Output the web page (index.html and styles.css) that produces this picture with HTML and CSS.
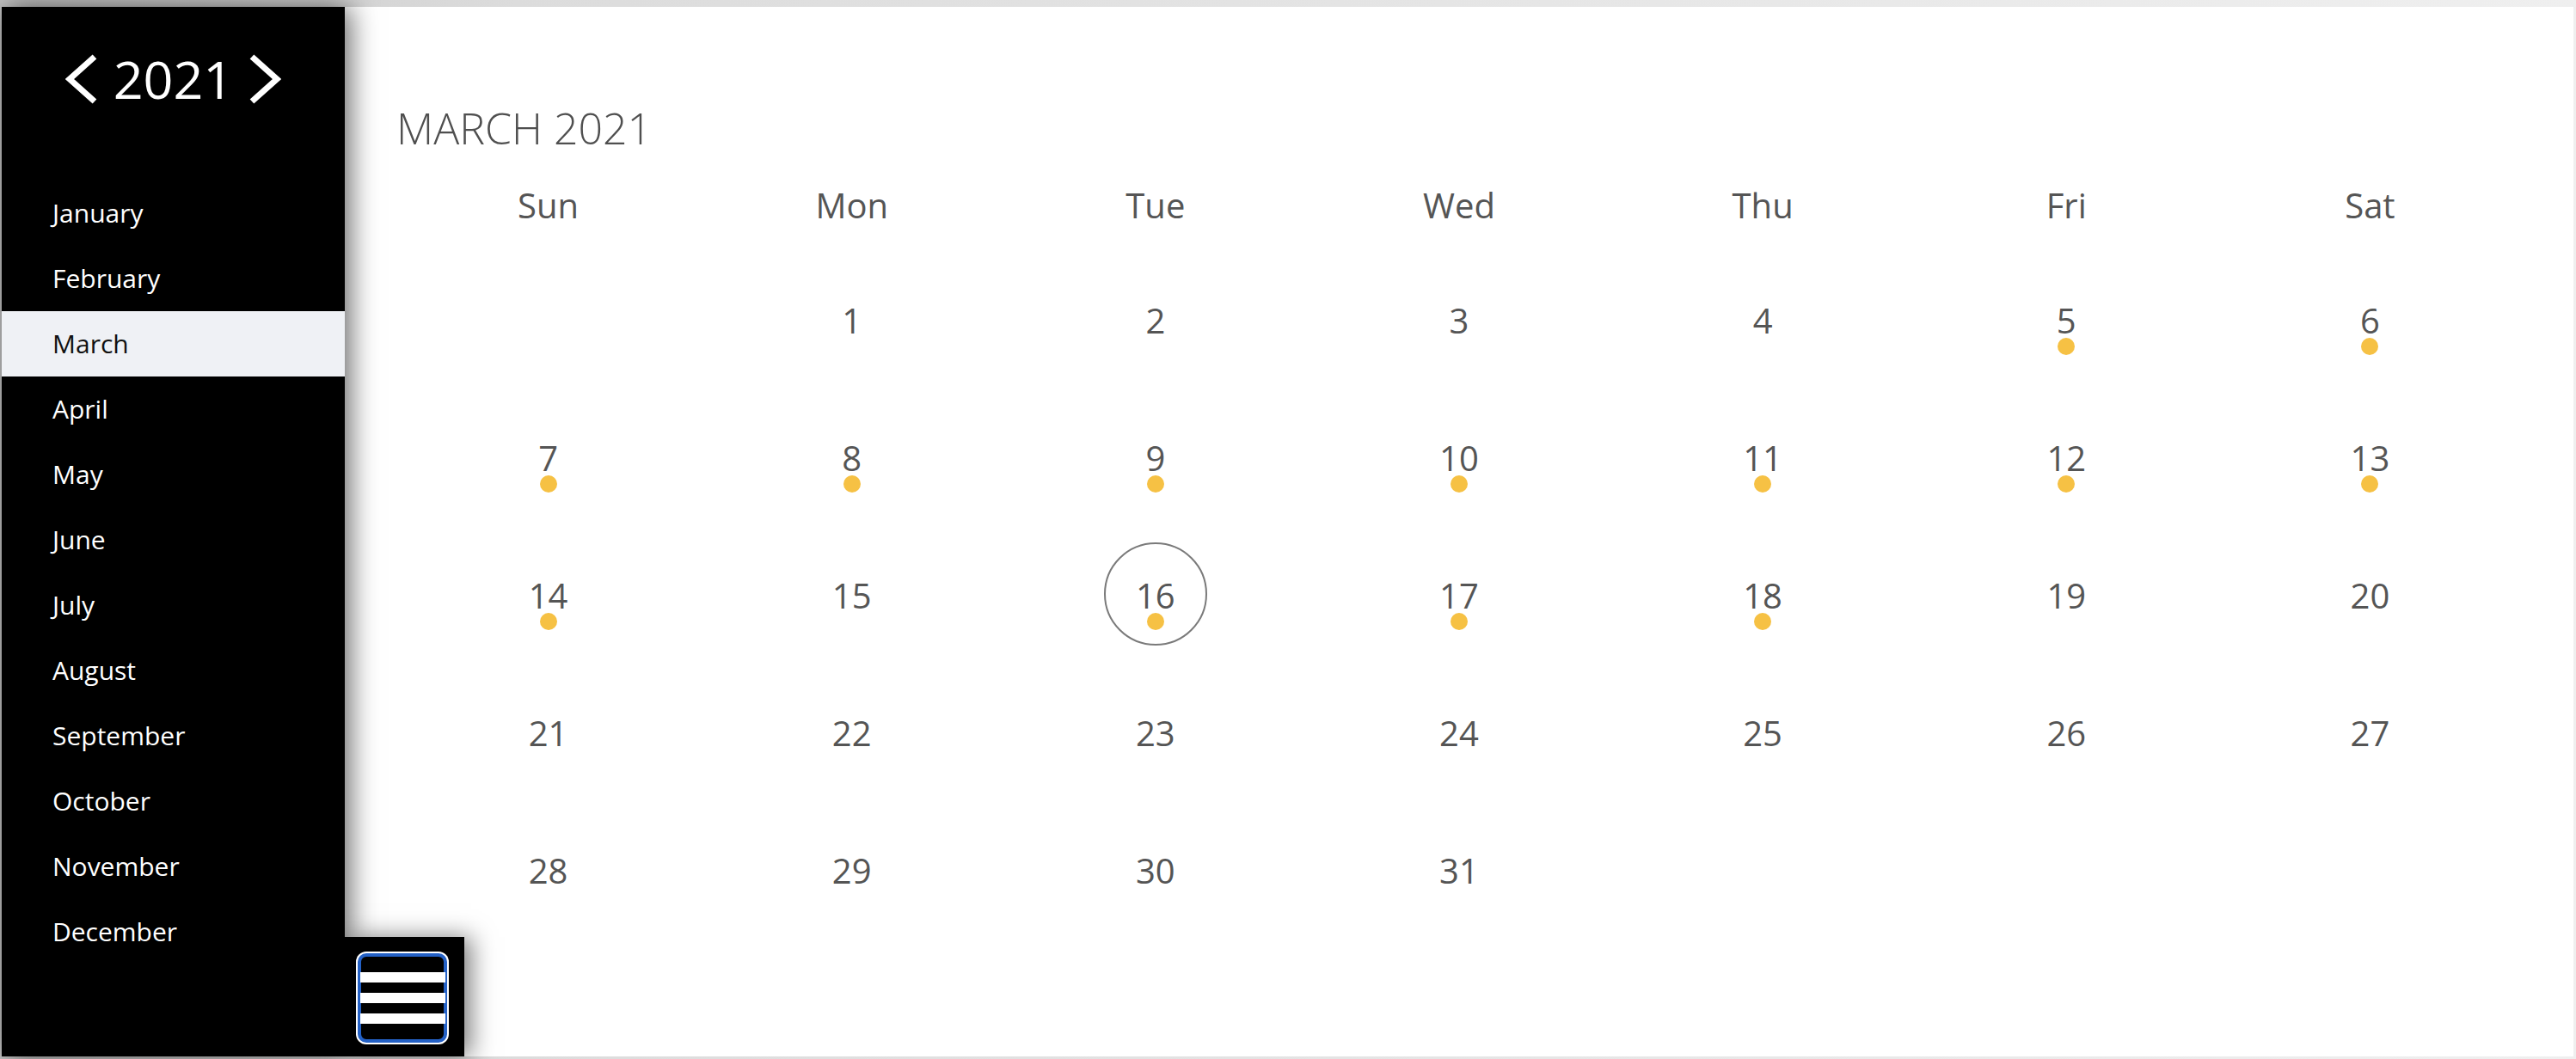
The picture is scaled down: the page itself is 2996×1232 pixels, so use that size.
FILE: index.html
```html
<!DOCTYPE html>
<html lang="en">
<head>
<meta charset="utf-8">
<title>Calendar</title>
<link rel="stylesheet" href="styles.css">
</head>
<body>
<div class="frame">
  <aside class="sidebar">
    <div class="year">
      <button class="chev" aria-label="Previous year">
        <svg width="38" height="58" viewBox="0 0 38 58"><polyline points="34,3 5,29 34,55" fill="none" stroke="#fff" stroke-width="7"/></svg>
      </button>
      <span class="year-num">2021</span>
      <button class="chev" aria-label="Next year">
        <svg width="38" height="58" viewBox="0 0 38 58"><polyline points="4,3 33,29 4,55" fill="none" stroke="#fff" stroke-width="7"/></svg>
      </button>
    </div>
    <ul class="months">
      <li>January</li>
      <li>February</li>
      <li class="active">March</li>
      <li>April</li>
      <li>May</li>
      <li>June</li>
      <li>July</li>
      <li>August</li>
      <li>September</li>
      <li>October</li>
      <li>November</li>
      <li>December</li>
    </ul>
    <div class="toggle-box">
      <button class="menu-btn" aria-label="Menu"><span></span><span></span><span></span></button>
    </div>
  </aside>
  <main class="calendar">
    <h1 class="cal-title">MARCH 2021</h1>
    <div class="weekdays">
      <div>Sun</div><div>Mon</div><div>Tue</div><div>Wed</div><div>Thu</div><div>Fri</div><div>Sat</div>
    </div>
    <div class="days">
      <div class="day"></div>
      <div class="day"><div class="day-inner"><span class="num">1</span></div></div>
      <div class="day"><div class="day-inner"><span class="num">2</span></div></div>
      <div class="day"><div class="day-inner"><span class="num">3</span></div></div>
      <div class="day"><div class="day-inner"><span class="num">4</span></div></div>
      <div class="day"><div class="day-inner"><span class="num">5</span><span class="dot"></span></div></div>
      <div class="day"><div class="day-inner"><span class="num">6</span><span class="dot"></span></div></div>

      <div class="day"><div class="day-inner"><span class="num">7</span><span class="dot"></span></div></div>
      <div class="day"><div class="day-inner"><span class="num">8</span><span class="dot"></span></div></div>
      <div class="day"><div class="day-inner"><span class="num">9</span><span class="dot"></span></div></div>
      <div class="day"><div class="day-inner"><span class="num">10</span><span class="dot"></span></div></div>
      <div class="day"><div class="day-inner"><span class="num">11</span><span class="dot"></span></div></div>
      <div class="day"><div class="day-inner"><span class="num">12</span><span class="dot"></span></div></div>
      <div class="day"><div class="day-inner"><span class="num">13</span><span class="dot"></span></div></div>

      <div class="day"><div class="day-inner"><span class="num">14</span><span class="dot"></span></div></div>
      <div class="day"><div class="day-inner"><span class="num">15</span></div></div>
      <div class="day today"><div class="day-inner"><span class="num">16</span><span class="dot"></span></div></div>
      <div class="day"><div class="day-inner"><span class="num">17</span><span class="dot"></span></div></div>
      <div class="day"><div class="day-inner"><span class="num">18</span><span class="dot"></span></div></div>
      <div class="day"><div class="day-inner"><span class="num">19</span></div></div>
      <div class="day"><div class="day-inner"><span class="num">20</span></div></div>

      <div class="day"><div class="day-inner"><span class="num">21</span></div></div>
      <div class="day"><div class="day-inner"><span class="num">22</span></div></div>
      <div class="day"><div class="day-inner"><span class="num">23</span></div></div>
      <div class="day"><div class="day-inner"><span class="num">24</span></div></div>
      <div class="day"><div class="day-inner"><span class="num">25</span></div></div>
      <div class="day"><div class="day-inner"><span class="num">26</span></div></div>
      <div class="day"><div class="day-inner"><span class="num">27</span></div></div>

      <div class="day"><div class="day-inner"><span class="num">28</span></div></div>
      <div class="day"><div class="day-inner"><span class="num">29</span></div></div>
      <div class="day"><div class="day-inner"><span class="num">30</span></div></div>
      <div class="day"><div class="day-inner"><span class="num">31</span></div></div>
      <div class="day"></div>
      <div class="day"></div>
      <div class="day"></div>
    </div>
  </main>
</div>
</body>
</html>
```

FILE: styles.css
```css
html, body {
  margin: 0;
  padding: 0;
}

body {
  height: 1232px;
  overflow: hidden;
  background: linear-gradient(90deg, #c4c4c4 0%, #dcdcdc 20%, #e6e6e6 60%, #efefef 100%);
  font-family: "Open Sans", "Noto Sans", sans-serif;
}

.frame {
  display: flex;
  margin: 8px 3px 0 2px;
  height: 1221px;
  background: #fff;
  position: relative;
}

.sidebar {
  position: relative;
  z-index: 2;
  width: 399px;
  flex: 0 0 399px;
  background: #000;
  color: #fff;
  box-shadow: 6px 0 30px rgba(0, 0, 0, 0.6);
}

.year {
  display: flex;
  align-items: center;
  justify-content: center;
  gap: 18px;
  height: 80px;
  margin-top: 44px;
}

.chev {
  background: none;
  border: 0;
  padding: 0;
  display: flex;
  cursor: pointer;
}

.year-num {
  font-size: 61px;
  line-height: 80px;
  font-weight: 400;
  color: #fff;
}

.months {
  list-style: none;
  margin: 78px 0 0;
  padding: 0;
}

.months li {
  height: 76px;
  line-height: 76px;
  padding-left: 59px;
  font-size: 30px;
  font-weight: 400;
  color: #fff;
}

.months li.active {
  background: #eff1f5;
  color: #111;
}

.toggle-box {
  position: absolute;
  left: 100%;
  bottom: 0;
  width: 139px;
  height: 139px;
  background: #000;
  display: flex;
  align-items: center;
  justify-content: center;
  box-shadow: 8px 0 26px rgba(0, 0, 0, 0.5);
}

.menu-btn {
  box-sizing: border-box;
  width: 104px;
  height: 104px;
  margin-left: -5px;
  margin-top: 2px;
  padding: 0;
  background: #000;
  border: 4px solid #2461c6;
  border-radius: 10px;
  box-shadow: 0 0 0 2px #fff;
  display: flex;
  flex-direction: column;
  justify-content: center;
  align-items: stretch;
  gap: 12px;
  cursor: pointer;
}

.menu-btn span {
  display: block;
  height: 12px;
  background: #fff;
  margin: 0 -2px 0 -1px;
}

.calendar {
  flex: 1;
  padding: 111px 60px 0;
  color: #555;
}

.cal-title {
  margin: 0;
  font-size: 50px;
  font-weight: 300;
  line-height: 60px;
  color: #4f4f4f;
}

.weekdays {
  display: grid;
  grid-template-columns: repeat(7, 1fr);
  margin-top: 30px;
  font-size: 40px;
  line-height: 60px;
  text-align: center;
  color: #555;
}

.days {
  display: grid;
  grid-template-columns: repeat(7, 1fr);
  grid-auto-rows: 160px;
  margin-top: 22px;
}

.day {
  display: flex;
  align-items: center;
  justify-content: center;
}

.day-inner {
  box-sizing: border-box;
  width: 120px;
  height: 120px;
  padding-top: 42px;
  border-radius: 50%;
  display: flex;
  flex-direction: column;
  align-items: center;
}

.today .day-inner {
  border: 2px solid #7a7a7a;
  padding-top: 40px;
}

.num {
  font-size: 40px;
  line-height: 40px;
  color: #555;
}

.dot {
  width: 20px;
  height: 20px;
  border-radius: 50%;
  background: #f6c144;
}
```
